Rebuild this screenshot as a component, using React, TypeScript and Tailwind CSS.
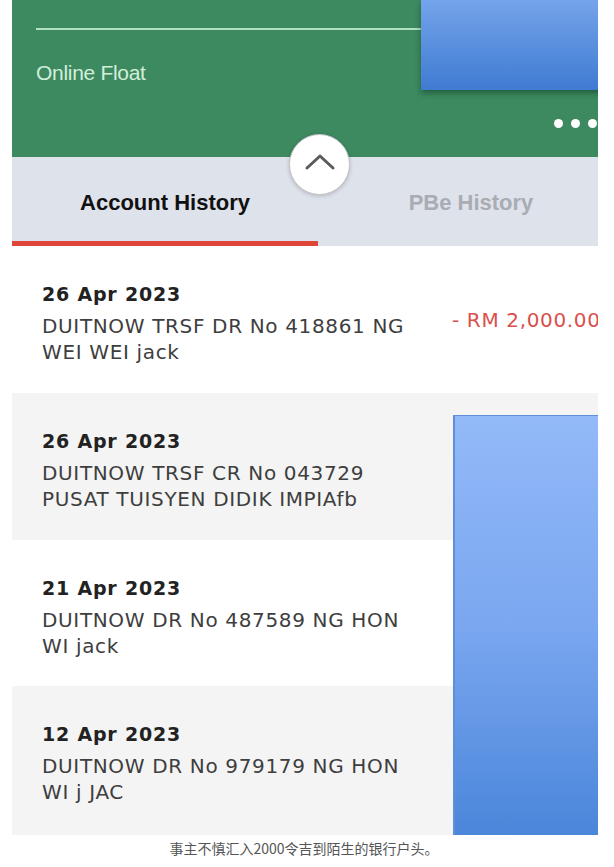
import React from "react";

type Row = { date: string; lines: string[]; amount?: string; bg: string; h: string };

const rows: Row[] = [
  { date: "26 Apr 2023", lines: ["DUITNOW TRSF DR No 418861 NG", "WEI WEI jack"], amount: "- RM 2,000.00", bg: "bg-white", h: "h-[147px]" },
  { date: "26 Apr 2023", lines: ["DUITNOW TRSF CR No 043729", "PUSAT TUISYEN DIDIK IMPIAfb"], bg: "bg-[#f4f4f4]", h: "h-[147px]" },
  { date: "21 Apr 2023", lines: ["DUITNOW DR No 487589 NG HON", "WI jack"], bg: "bg-white", h: "h-[146px]" },
  { date: "12 Apr 2023", lines: ["DUITNOW DR No 979179 NG HON", "WI j JAC"], bg: "bg-[#f4f4f4]", h: "h-[149px]" },
];

export default function App() {
  return (
    <div className="w-[614px] h-[867px] bg-white overflow-hidden">
      <div className="ml-[12px] w-[586px] h-[835px] overflow-hidden relative">
        <div className="w-[612px]">
          {/* Header */}
          <div className="h-[157px] bg-[#3d8a61] flex relative">
            <div className="w-[409px] pl-[24px]">
              <div className="mt-[28px] h-[2px] bg-[#b0e0c0]" />
              <div className="mt-[31px] text-[21px] leading-[24px] tracking-[-0.3px] text-[#d3eed9] font-['Liberation_Sans',sans-serif]">
                Online Float
              </div>
            </div>
            <div className="w-[190px] h-[90px] bg-gradient-to-b from-[#74a4ea] to-[#3f7bd2] shadow-[0_3px_6px_rgba(0,40,20,0.45)]" />
            <div className="absolute left-[542px] top-[119px] flex gap-[8px]">
              <div className="w-[9px] h-[9px] rounded-full bg-white" />
              <div className="w-[9px] h-[9px] rounded-full bg-white" />
              <div className="w-[9px] h-[9px] rounded-full bg-white" />
            </div>
          </div>

          {/* Tabs */}
          <div className="h-[89px] bg-[#dee2eb] flex font-['Liberation_Sans',sans-serif]">
            <div className="w-[306px] flex flex-col">
              <div className="pt-[32px] leading-[28px] text-[22px] font-bold text-[#111] text-center">
                Account History
              </div>
              <div className="mt-auto h-[5px] bg-[#e0453a]" />
            </div>
            <div className="w-[306px] flex flex-col">
              <div className="pt-[32px] leading-[28px] text-[22px] font-bold text-[#a9acb2] text-center">
                PBe History
              </div>
            </div>
          </div>

          {/* Rows */}
          <div className="font-['DejaVu_Sans',sans-serif]">
            {rows.map((r, i) => (
              <div key={i} className={`${r.bg} ${r.h} flex`}>
                <div className="w-[413px] pl-[30px] pt-[36px]">
                  <div className="text-[19px] leading-[24px] font-bold tracking-[0.8px] text-[#222]">{r.date}</div>
                  <div className="mt-[7px] text-[20px] leading-[26px] tracking-[0.65px] text-[#3e3e3e]">
                    {r.lines.map((l, j) => (
                      <div key={j} className="whitespace-nowrap">{l}</div>
                    ))}
                  </div>
                </div>
                {r.amount && (
                  <div className="pt-[61px] pl-[27px] text-[20px] leading-[26px] tracking-[0.65px] text-[#d9504c] whitespace-nowrap">
                    {r.amount}
                  </div>
                )}
              </div>
            ))}
          </div>
        </div>

        {/* Up button */}
        <div className="absolute left-[277px] top-[134px] w-[61px] h-[61px] rounded-full bg-white border-[1.5px] border-[#c4c4c4] shadow-[0_1px_4px_rgba(0,0,0,0.2)] flex items-center justify-center">
          <svg width="32" height="20" viewBox="0 0 32 20" className="mt-[-6px]">
            <path d="M3 16 L16 4 L29 16" fill="none" stroke="#5a5a5a" strokeWidth="3" strokeLinecap="round" strokeLinejoin="round" />
          </svg>
        </div>

        {/* Blue cover */}
        <div className="absolute left-[441px] top-[415px] w-[160px] h-[420px] border-l-[2px] border-t-[1px] border-[#5f8fd8] bg-gradient-to-b from-[#93b9f8] via-[#7aa7f0] to-[#4a86da]" />
      </div>
      <div className="h-[26px] flex items-center justify-center pr-[6px] text-[14px] text-[#555] font-['Noto_Sans_CJK_SC','Noto_Sans',sans-serif]">
        事主不慎汇入2000令吉到陌生的银行户头。
      </div>
    </div>
  );
}
